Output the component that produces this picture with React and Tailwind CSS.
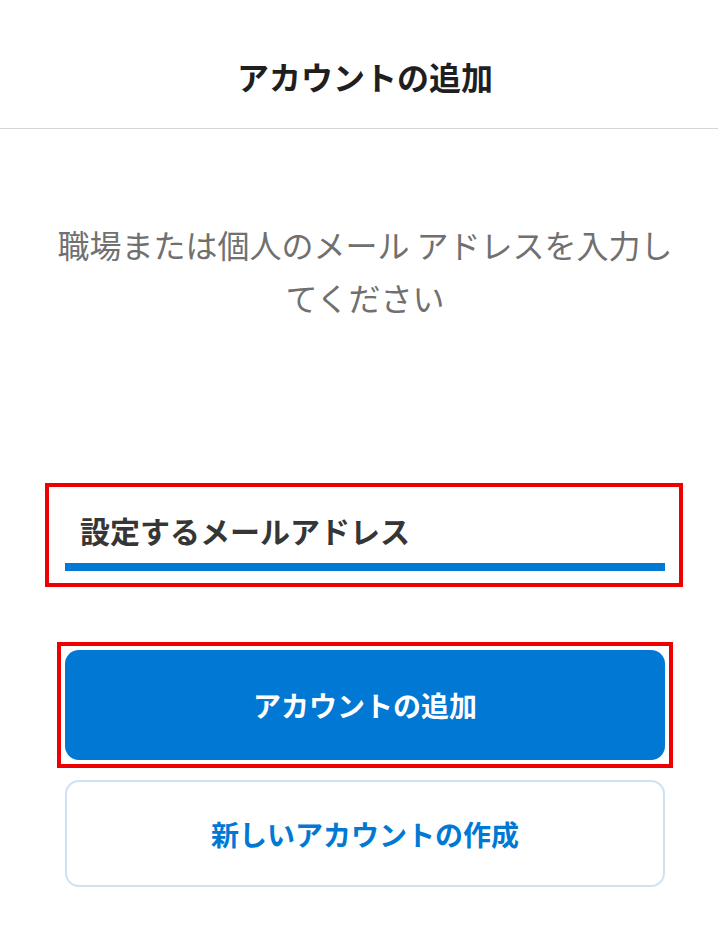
export default function App() {
  const font = { fontFamily: '"Noto Sans CJK JP", "Noto Sans", sans-serif' };
  return (
    <div className="w-[718px] h-[938px] bg-white overflow-hidden" style={font}>
      <div className="h-[129px] border-b border-[#d6d6d6] flex justify-center pt-[52px] pl-[12px]">
        <h1 className="text-[32px] leading-[48px] font-bold text-[#1f1f1f]">アカウントの追加</h1>
      </div>
      <p className="mt-[89px] ml-[47px] mr-[35px] text-center text-[32px] leading-[53px] text-[#707070]">
        職場または個人のメール アドレスを入力してください
      </p>
      <div className="mt-[159px] ml-[45px] w-[638px] h-[104px] border-4 border-[#ee0000] pt-[20px] pl-[16px] pr-[14px]">
        <div className="pl-[15px] text-[30px] leading-[46px] font-bold text-[#363636]">
          設定するメールアドレス
        </div>
        <div className="mt-[10px] h-[8px] bg-[#0078d4]"></div>
      </div>
      <div className="mt-[55px] ml-[57px] w-[616px] h-[126px] border-4 border-[#ee0000] p-[4px]">
        <button className="w-full h-full rounded-[14px] bg-[#0078d4] text-white text-[28px] font-bold">
          アカウントの追加
        </button>
      </div>
      <button className="mt-[12px] ml-[65px] w-[600px] h-[107px] rounded-[14px] border-2 border-[#cde3f5] bg-white text-[#0078d4] text-[28px] font-bold">
        新しいアカウントの作成
      </button>
    </div>
  );
}
